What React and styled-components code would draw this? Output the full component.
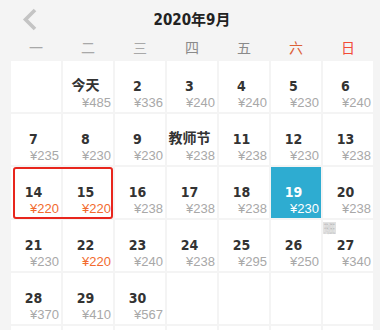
import React from "react";
import styled, { createGlobalStyle } from "styled-components";

const page_bg = "#f4f4f4";
const cell_w = 50;
const cell_h = 51;
const gap = 2;

const GlobalStyle = createGlobalStyle`
  html, body {
    margin: 0;
    padding: 0;
    background: ${page_bg};
    overflow: hidden;
  }
`;

const Page = styled.div`
  width: 380px;
  height: 330px;
  overflow: hidden;
  padding-left: 11px;
  box-sizing: border-box;
  font-family: "Liberation Sans", "Noto Sans CJK SC", sans-serif;
`;

const Header = styled.div`
  position: relative;
  height: 36px;
  width: ${cell_w * 7 + gap * 6}px;
  display: flex;
  align-items: center;
  justify-content: center;
`;

const Back = styled.svg`
  position: absolute;
  left: 10px;
  top: 8px;
`;

const Title = styled.div`
  font-family: "DejaVu Sans Condensed", "DejaVu Sans", "Noto Sans CJK SC", sans-serif;
  font-weight: bold;
  font-size: 15px;
  color: #222;
  padding-top: 1px;
`;

const WeekRow = styled.div`
  display: grid;
  grid-template-columns: repeat(7, ${cell_w}px);
  column-gap: ${gap}px;
  height: 22px;
  padding-bottom: 3px;
  align-items: center;
`;

const WeekDay = styled.div`
  text-align: center;
  font-family: "Noto Sans CJK SC", sans-serif;
  font-size: 14px;
  color: ${(p) => p.$color || "#a8a8a8"};
`;

const Grid = styled.div`
  position: relative;
  display: grid;
  grid-template-columns: repeat(7, ${cell_w}px);
  grid-auto-rows: ${cell_h}px;
  gap: ${gap}px;
`;

const Cell = styled.div`
  position: relative;
  background: ${(p) => (p.$active ? "#2eacd1" : "#fff")};
  display: flex;
  flex-direction: column;
  padding: 17px 2px 2px 0;
  box-sizing: border-box;
`;

const Day = styled.div`
  text-align: center;
  padding-right: 3px;
  font-family: "DejaVu Sans Condensed", "DejaVu Sans", "Noto Sans CJK SC", sans-serif;
  font-weight: bold;
  font-size: 14px;
  line-height: 16px;
  color: ${(p) => (p.$active ? "#fff" : "#333")};
  ${(p) =>
    p.$word &&
    `font-family: "Noto Sans CJK SC", sans-serif; line-height: 14px; margin-top: -1px;`}
`;

const Price = styled.div`
  margin-top: auto;
  text-align: right;
  font-size: 13px;
  line-height: 14px;
  color: ${(p) => (p.$active ? "#fff" : p.$low ? "#f26a2e" : "#a8a8a8")};
`;

const Tag = styled.div`
  position: absolute;
  top: 2px;
  left: 0;
  width: 13px;
  height: 12px;
  background: #e2e2e2;
  color: #fff;
  font-family: "Noto Sans CJK SC", sans-serif;
  font-size: 11px;
  line-height: 12px;
  text-align: center;
  -webkit-text-stroke: 0.3px #b5b5b5;
`;

const Selection = styled.div`
  position: absolute;
  left: 2px;
  top: ${(cell_h + gap) * 2}px;
  width: 100px;
  height: 52px;
  border: 2px solid #e8261d;
  border-radius: 3px;
  box-sizing: border-box;
  pointer-events: none;
`;

const weekdays = [
  ["一"],
  ["二"],
  ["三"],
  ["四", "#8a8a8a"],
  ["五", "#8a8a8a"],
  ["六", "#dc6038"],
  ["日", "#f24b36"],
];

const days = [
  null,
  { d: "今天", p: 485, word: true },
  { d: 2, p: 336 },
  { d: 3, p: 240 },
  { d: 4, p: 240 },
  { d: 5, p: 230 },
  { d: 6, p: 240 },
  { d: 7, p: 235 },
  { d: 8, p: 230 },
  { d: 9, p: 230 },
  { d: "教师节", p: 238, word: true },
  { d: 11, p: 238 },
  { d: 12, p: 230 },
  { d: 13, p: 238 },
  { d: 14, p: 220, low: true },
  { d: 15, p: 220, low: true },
  { d: 16, p: 238 },
  { d: 17, p: 238 },
  { d: 18, p: 238 },
  { d: 19, p: 230, active: true },
  { d: 20, p: 238 },
  { d: 21, p: 230 },
  { d: 22, p: 220, low: true },
  { d: 23, p: 240 },
  { d: 24, p: 238 },
  { d: 25, p: 295 },
  { d: 26, p: 250 },
  { d: 27, p: 340, tag: "班" },
  { d: 28, p: 370 },
  { d: 29, p: 410 },
  { d: 30, p: 567 },
];

while (days.length < 42) days.push(null);

function App() {
  return (
    <Page>
      <GlobalStyle />
      <Header>
        <Back width="18" height="24" viewBox="0 0 18 24">
          <polyline
            points="14,2 4.5,11.5 14,21"
            fill="none"
            stroke="#c4c4c4"
            strokeWidth="3.6"
          />
        </Back>
        <Title>2020年9月</Title>
      </Header>
      <WeekRow>
        {weekdays.map(([w, c]) => (
          <WeekDay key={w} $color={c}>
            {w}
          </WeekDay>
        ))}
      </WeekRow>
      <Grid>
        {days.map((item, i) =>
          item ? (
            <Cell key={i} $active={item.active}>
              {item.tag && <Tag>{item.tag}</Tag>}
              <Day $word={item.word} $active={item.active}>
                {item.d}
              </Day>
              <Price $low={item.low} $active={item.active}>
                ¥{item.p}
              </Price>
            </Cell>
          ) : (
            <Cell key={i} />
          )
        )}
        <Selection />
      </Grid>
    </Page>
  );
}

export default App;
